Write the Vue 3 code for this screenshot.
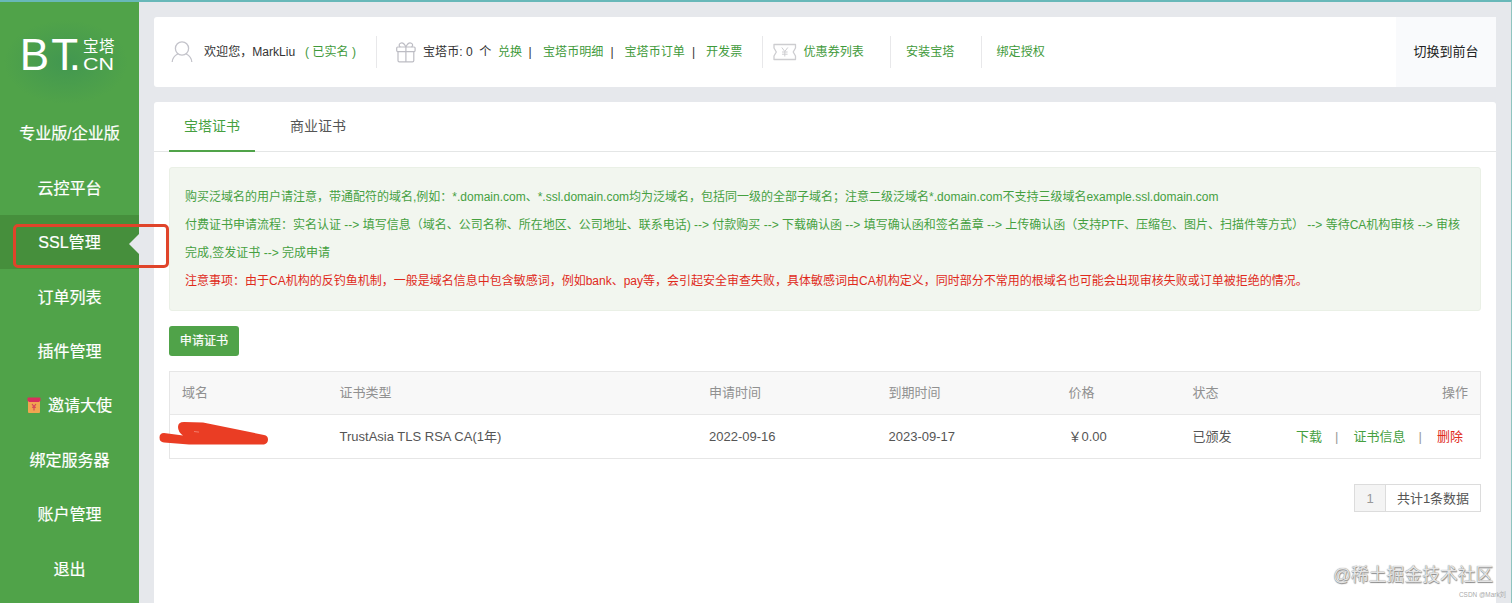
<script setup>
const menu = ['专业版/企业版', '云控平台', 'SSL管理', '订单列表', '插件管理', '邀请大使', '绑定服务器', '账户管理', '退出']
const heads = ['域名', '证书类型', '申请时间', '到期时间', '价格', '状态', '操作']
</script>

<template>
  <div class="page">
    <aside class="side">
      <svg class="logo" width="139" height="104" viewBox="0 2 139 104">
        <defs>
          <radialGradient id="glow">
            <stop offset="0" stop-color="#429750" />
            <stop offset="1" stop-color="#50a349" />
          </radialGradient>
        </defs>
        <ellipse cx="66" cy="62" rx="62" ry="42" fill="url(#glow)" />
        <g fill="#fff">
          <text x="19.800 51.300 68.800" y="70.300" font-size="44">BT.</text>
          <text x="83" y="52.3" font-size="15.5" textLength="31.5">宝塔</text>
          <text x="83" y="70.3" font-size="17" textLength="31" lengthAdjust="spacingAndGlyphs">CN</text>
        </g>
      </svg>
      <nav>
        <a v-for="(m, i) in menu" :key="m" class="item" :class="{ active: i === 2 }">
          <svg v-if="i === 5" class="packet" width="14" height="17" viewBox="0 0 14 17">
            <rect x="1" y="1.5" width="12" height="14.5" rx="1" fill="#f0a650" />
            <path d="M.5 1.500Q.5.5 1.500.5h11q1 0 1 1v2L12 5H2L.5 3.500z" fill="#d8305d" />
            <path d="M5 7l2 2.500L9 7M7 9.500V13.500M5 10.200h4" stroke="#d5405a" stroke-width="1.100" fill="none" />
          </svg>
          <span>{{ m }}</span>
        </a>
      </nav>
    </aside>

    <main class="main">
      <header class="top">
        <svg width="22" height="22" viewBox="0 0 22 22" fill="none" stroke="#c3c3ca" stroke-width="1.3">
          <circle cx="11" cy="7.500" r="6.600" />
          <path d="M1.200 21c.3-4 2.500-6.600 5.600-8M20.800 21c-.3-4-2.500-6.600-5.600-8" />
        </svg>
        <span>欢迎您，MarkLiu</span>
        <span class="g real">( 已实名 )</span>
        <i></i>
        <svg width="20" height="21" viewBox="0 0 20 21" fill="none" stroke="#bdbdc4" stroke-width="1.2">
          <rect x=".7" y="5" width="18.400" height="4.600" rx="1" />
          <path d="M2 9.600V18.500q0 1.300 1.300 1.300h13.200q1.300 0 1.300-1.300V9.600M9.900 5v14.800M9.900 5C8 1 6 .5 4.500 1.200 2.500 2.200 3 4 4.300 5M9.900 5c1.900-4 3.900-4.500 5.400-3.800 2 1 1.500 2.800.2 3.800" />
        </svg>
        <span>宝塔币: 0&nbsp; 个</span>
        <span class="g">兑换</span>
        <span>|</span>
        <span class="g">宝塔币明细</span>
        <span>|</span>
        <span class="g">宝塔币订单</span>
        <span>|</span>
        <span class="g">开发票</span>
        <i></i>
        <svg width="24" height="18" viewBox="0 0 24 18" fill="none" stroke="#cdcdd0" stroke-width="1.3">
          <path d="M1 1.500h21.500v3.500l-2.300 4 2.300 4v3.500H1V13l2.300-4L1 5z" stroke-linejoin="round" />
          <path d="M8.800 4.500L11.800 8.500l3-4M11.800 8.500v5M9 9h5.600M9 11.200h5.600" stroke-width="1" />
        </svg>
        <span class="g">优惠券列表</span>
        <i></i>
        <span class="g">安装宝塔</span>
        <i></i>
        <span class="g">绑定授权</span>
        <div class="switch">切换到前台</div>
      </header>

      <section class="panel">
        <div class="tabs">
          <a class="on">宝塔证书</a>
          <a>商业证书</a>
        </div>
        <div class="notice">
          <p>购买泛域名的用户请注意，带通配符的域名,例如：*.domain.com、*.ssl.domain.com均为泛域名，包括同一级的全部子域名；注意二级泛域名*.domain.com不支持三级域名example.ssl.domain.com</p>
          <p>付费证书申请流程：实名认证 --&gt; 填写信息（域名、公司名称、所在地区、公司地址、联系电话) --&gt; 付款购买 --&gt; 下载确认函 --&gt; 填写确认函和签名盖章 --&gt; 上传确认函（支持PTF、压缩包、图片、扫描件等方式） --&gt; 等待CA机构审核 --&gt; 审核</p>
          <p>完成,签发证书 --&gt; 完成申请</p>
          <p class="red">注意事项：由于CA机构的反钓鱼机制，一般是域名信息中包含敏感词，例如bank、pay等，会引起安全审查失败，具体敏感词由CA机构定义，同时部分不常用的根域名也可能会出现审核失败或订单被拒绝的情况。</p>
        </div>
        <button class="apply">申请证书</button>
        <div class="table">
          <div class="row head"><span v-for="h in heads" :key="h">{{ h }}</span></div>
          <div class="row">
            <span class="masked">
              <svg class="scribble" width="110" height="26" viewBox="0 0 110 26">
                <path d="M5 12Q.5 12 .5 16.500T5 21.500L30 23.500H105Q109 22.500 109 18.500T105 14L44 1.500 25 1Q19 1 19 6T24 14.500z" fill="#ea3d24" />
                <path d="M35 10.500l5 .6" stroke="#f59a8b" stroke-width=".7" />
              </svg>
            </span>
            <span>TrustAsia TLS RSA CA(1年)</span>
            <span>2022-09-16</span>
            <span>2023-09-17</span>
            <span>￥0.00</span>
            <span>已颁发</span>
            <span class="ops"><a>下载</a><b>|</b><a>证书信息</a><b>|</b><a class="red">删除</a></span>
          </div>
        </div>
        <div class="pager"><span class="num">1</span><span class="total">共计1条数据</span></div>
      </section>
    </main>

    <div class="mark"></div>
    <div class="wm">@稀土掘金技术社区</div>
    <div class="wm2">CSDN @Mark刘</div>
  </div>
</template>

<style>
body { margin: 0; overflow: hidden; }
</style>

<style scoped>
* { box-sizing: border-box; }
.page {
  position: relative; display: flex; width: 1512px; height: 603px; overflow: hidden;
  background: #e6e8ec; border-top: 2px solid #68b8b9; border-right: 1px solid #8fc4bf;
  font: 12.07px/20px "Liberation Sans", "Noto Sans CJK SC", sans-serif; color: #333; white-space: nowrap;
}
.side { width: 139px; background: #50a349; flex: none; }
.logo { display: block; }
.item {
  position: relative; height: 54.45px; display: flex; align-items: center; justify-content: center;
  color: #fff; font-size: 16.05px; -webkit-text-stroke: .2px #fff;
}
.active { background: #468f3c; }
.active::after {
  content: ""; position: absolute; right: 0; top: 19px; border: 10px solid transparent;
  border-left: 0; border-right-color: #e6e8ec;
}
.packet { margin-right: 7px; }
.main { flex: 1; min-width: 0; padding: 15px 15px 0; display: flex; flex-direction: column; gap: 15px; }
.top {
  height: 70px; background: #fff; border-radius: 3px; display: grid; align-items: center; padding-left: 17px;
  grid-template-columns: 33px 101px 71px 20px 27px 75px 30.5px 14.500px 67.500px 14px 67.500px 14px 55.500px 11px 31px 86.500px 16px 75px 15.500px 1fr 100px;
}
.top i { width: 1px; height: 32px; background: #e8e8ea; }
.g { color: #3f9a3b; }
.switch {
  height: 70px; background: #f9fafc; font-size: 13px; display: flex; align-items: center; justify-content: center; color: #222;
}
.panel { background: #fff; flex: 1; border-radius: 3px 3px 0 0; padding: 0 15px; }
.tabs { height: 50px; margin: 0 -15px; padding-left: 15px; border-bottom: 1px solid #e4e6e6; display: flex; gap: 20px; }
.tabs a { width: 86px; height: 50px; line-height: 48px; text-align: center; font-size: 14px; color: #555; }
.tabs .on { color: #45a03f; border-bottom: 2px solid #50a349; }
.notice {
  margin-top: 15px; height: 144px; padding: 15px; border: 1px solid #eaf0e6; border-radius: 3px; background: #f2f6ef;
  color: #45a03f; font-size: 12.01px; line-height: 28px;
}
.notice p { margin: 0; }
.red, .notice .red { color: #e02a1b; }
.apply {
  display: block; margin-top: 15px; width: 70px; height: 30px; border: 0; border-radius: 3px; padding: 0;
  background: #50a349; color: #fff; font: inherit; -webkit-text-stroke: .2px #fff;
}
.table { margin-top: 15px; border: 1px solid #e6e6e6; font-size: 13px; color: #555; }
.row {
  height: 43px; display: grid; align-items: center; padding: 0 12px;
  grid-template-columns: 157.500px 369.500px 179.500px 180px 124px 87px 1fr;
}
.head { background: #f8f8f8; border-bottom: 1px solid #e8e8e8; color: #909090; }
.head span:last-child { text-align: right; }
.masked { position: relative; height: 20px; }
.scribble { position: absolute; left: -23px; top: -6px; }
.ops { display: flex; justify-content: flex-end; padding-right: 5px; color: #45a03f; }
.ops b { font-weight: 400; color: #999; width: 31.5px; padding-left: 13px; }
.pager {
  margin: 25px 0 0 auto; width: 127px; height: 28px; display: flex; border: 1px solid #dcdcdc;
  font-size: 13px; line-height: 27px; text-align: center; color: #555;
}
.num { width: 31px; background: #f4f4f4; border-right: 1px solid #dcdcdc; color: #999; }
.total { flex: 1; }
.mark { position: absolute; left: 13px; top: 222px; width: 156px; height: 44px; border: 3px solid #e0442a; border-radius: 5px; }
.wm { position: absolute; left: 1333px; top: 561px; font-size: 17.8px; line-height: 24px; color: #e4e4e4; text-shadow: 0 0 1px #777, .5px .5px 1px #888; }
.wm2 { position: absolute; left: 1459px; top: 588px; font-size: 6.4px; line-height: 10px; color: #aaa; }
</style>
